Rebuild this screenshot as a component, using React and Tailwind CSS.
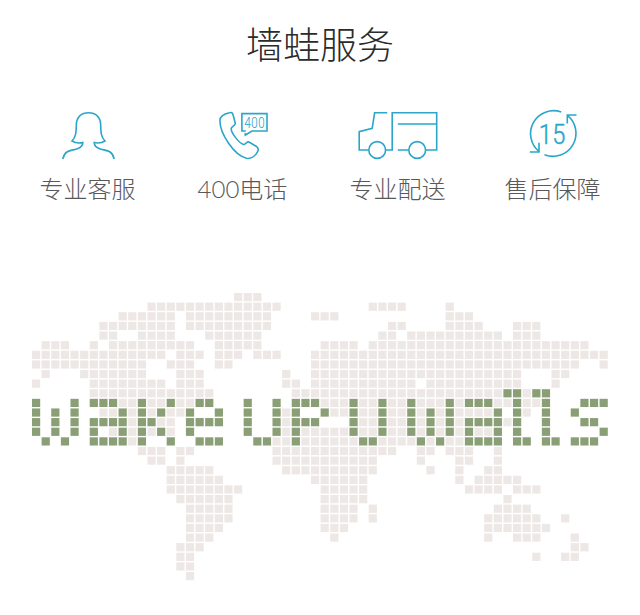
const STROKE = '#2ba6c9';

// Each row lists inclusive column ranges: land tiles first, then lettering tiles.
const ROWS = [
  ['21-23', ''],
  ['12-25 35-38 43', ''],
  ['9-14 16-24 29-31 43-45', ''],
  ['7-14 16-24 37-38 43-46 50-52', ''],
  ['7-8 11-14 18-23 36-37 39-48 50-52', ''],
  ['1-3 6 8-16 19-23 30-33 35-57', ''],
  ['0-13 15-17 19-21 23-25 29-59', ''],
  ['0-11 14-16 19-20 29-56 59', ''],
  ['1 5-11 15-17 26 29-50 54-55', ''],
  ['0 6-13 15-17 26-27 29-39 41-50 54', ''],
  ['6-18 27-48 51', '49-50 52-53'],
  ['9-10 12-13 15-16 30-32 34-35 37-38 40-42 44 48-49 51-52', '0 4 6-8 11 14 17-18 22 25 27-29 33 36 39 43 45-47 50 53 57-59'],
  ['7-8 10 12 14-15 26 31-32 34-35 37-38 40 42 44-47 51', '0 2 4 9 11 13 16 19 22 25 27 30 33 36 39 41 43 48 50 53 56'],
  ['10 13-14 26 34-35 37-38 40 42 44 49', '0 2 4 6-9 11-12 16-19 22 25 27-29 33 36 39 41 43 45-48 50 53 57-58'],
  ['8 10 12 14 26 28-32 34-35 37-38 40 42 44 46-47', '0 2 4 6 9 11 13 16 22 25 27 33 36 39 41 43 45 48 50 53 59'],
  ['10 25-26 28-33 36-39 41 43-44', '1 3 6-9 11 14 17-19 23-24 27 34-35 40 42 45-48 50-51 53-54 56-58'],
  ['11-13 15-16 25-37 40-41 43-45 48', ''],
  ['12-13 15 25-35 40 44-45 48', ''],
  ['14-18 26-35 41 44 47-48', ''],
  ['14-19 29-34 44 46-50', ''],
  ['14-21 30-34 45-48 50-52', ''],
  ['15-20 30-34 49', ''],
  ['16-20 30-33 35 48-51', ''],
  ['16-20 30-33 35 47-52 55', ''],
  ['16-19 30-32 47-53', ''],
  ['16-18 31 47 50-52 56', ''],
  ['15-17 56-57', ''],
  ['15-16 52 55-56', ''],
  ['15-16', ''],
  ['16', ''],
];

const PITCH = 9.62;

function columns(ranges) {
  return ranges.split(' ').filter(Boolean).flatMap((range) => {
    const [from, to = from] = range.split('-').map(Number);
    return Array.from({ length: to - from + 1 }, (_, i) => from + i);
  });
}

function Tiles({ layer, fill }) {
  return (
    <g fill={fill}>
      {ROWS.flatMap((row, y) =>
        columns(row[layer]).map((x) => (
          <rect key={`${x}-${y}`} x={x * PITCH} y={y * PITCH} width="8.2" height="8.2" />
        ))
      )}
    </g>
  );
}

function WorldMap() {
  return (
    <svg viewBox="0 0 576 288" className="block w-full" role="img" aria-label="wake up walls">
      <Tiles layer={0} fill="#ede8e5" />
      <Tiles layer={1} fill="#8a9f76" />
    </svg>
  );
}

function Icon({ children }) {
  return (
    <svg
      viewBox="0 0 80 52"
      className="h-[52px] w-20"
      fill="none"
      stroke={STROKE}
      strokeWidth="1.6"
      aria-hidden="true"
    >
      {children}
    </svg>
  );
}

function AgentIcon() {
  return (
    <Icon>
      <path d="M14.8 51C17 41 24 43 30 40.5C33.5 39 34.8 37 34.8 34.5C31 35.5 27 34.8 24 33C28 29 28.3 24 28.3 17C28.3 9 33.5 4.8 40.5 4.8C47.5 4.8 52.7 9 52.7 17C52.7 24 53 29 57 33C54 34.8 50.5 35.5 46.2 34.5C46.2 37 47.5 39 51 40.5C57 43 64 41 66.2 51" />
    </Icon>
  );
}

function PhoneIcon() {
  return (
    <Icon>
      <path d="M26.5 4.8C28.3 4.2 29.5 4.8 30 6.5L32.3 15.2C32.8 17.3 28.6 18.5 28.2 20.5C28 25 36 35 40.5 36.5C42.5 37 43.5 33 46 34L53.5 38.5C55.5 40 55.5 42 54.5 43.8C52 48.5 47.5 51 43.5 50.3C31 47 17 26 16.9 12.5C17 8.5 21 6 26.5 4.8Z" />
      <path d="M42.8 23H38.9V5.6H64V23H49L42.3 27V25" />
      <text x="51.5" y="19.5" textAnchor="middle" fill={STROKE} stroke="none" className="font-['Roboto_Condensed','Roboto',sans-serif] text-[14px] font-light">
        400
      </text>
    </Icon>
  );
}

function TruckIcon() {
  return (
    <Icon>
      <path d="M29.2 4.8H16.6L14.2 20.3L1.2 23.6V42H10.7M27.7 42H34.2V4.8H78.7V42H67.7M39.8 42H50.7M39.8 16H78.7" />
      <circle cx="19.2" cy="42" r="8.4" />
      <circle cx="59.2" cy="42" r="8.4" />
    </Icon>
  );
}

function ReturnIcon() {
  return (
    <Icon>
      <path d="M48.2 4A23 23 0 0 0 26 43.5M16.8 44H26V34.7" />
      <path d="M31.5 46.7A23 23 0 0 0 54.4 7.4M63.5 7H54.3V15.6" />
      <text x="39" y="35.5" textAnchor="middle" fill={STROKE} strokeWidth="0.3" className="font-['Roboto_Condensed','Roboto',sans-serif] text-[28px] font-light">
        15
      </text>
    </Icon>
  );
}

const SERVICES = [
  { label: '专业客服', Glyph: AgentIcon },
  { label: '400电话', Glyph: PhoneIcon },
  { label: '专业配送', Glyph: TruckIcon },
  { label: '售后保障', Glyph: ReturnIcon },
];

export default function App() {
  return (
    <main className="min-h-screen bg-white pt-6 pb-8 font-['Lato','Noto_Sans_CJK_SC',sans-serif] font-light">
      <h1 className="text-center text-[37px] leading-[42px] text-[#2b2b2b]">墙蛙服务</h1>
      <ul className="mt-[42px] grid grid-cols-4 px-2.5">
        {SERVICES.map(({ label, Glyph }) => (
          <li key={label} className="flex flex-col items-center gap-[13px]">
            <Glyph />
            <span className="text-2xl text-[#58595b]">{label}</span>
          </li>
        ))}
      </ul>
      <div className="mt-[88px] px-8">
        <WorldMap />
      </div>
    </main>
  );
}
